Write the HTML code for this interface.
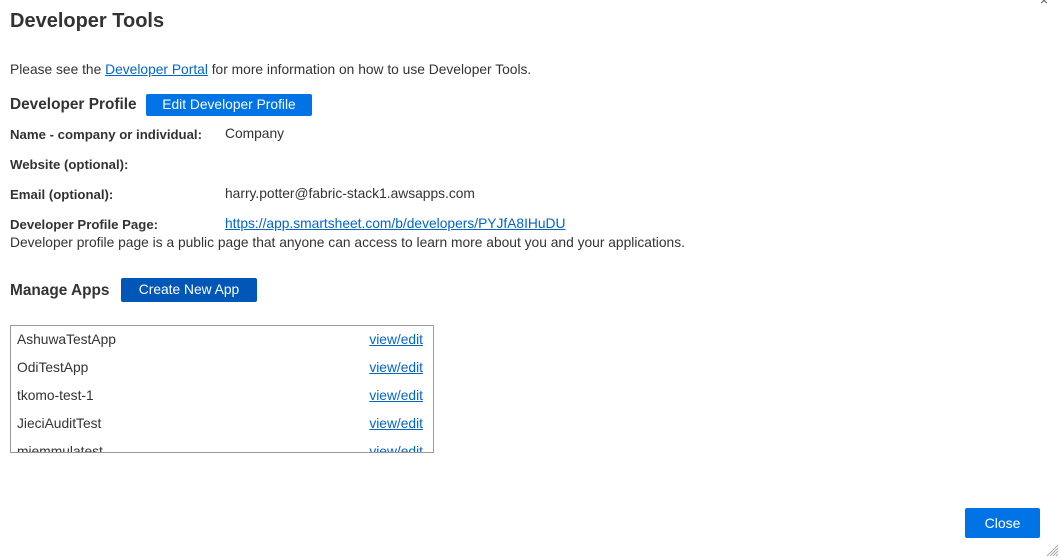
<!DOCTYPE html>
<html><head><style>
body{margin:0;width:1060px;height:558px;background:#fff;font-family:"Liberation Sans",sans-serif;color:#333;position:relative;overflow:hidden;font-size:13.8px}
.a{position:absolute;white-space:nowrap}
h1{position:absolute;left:10px;top:10px;margin:0;font-size:20px;font-weight:bold;color:#333}
a{color:#0066cc;text-decoration:underline}
.b{font-weight:bold;font-size:13.2px}
.btn{position:absolute;color:#fff;text-align:center;border-radius:2px;font-size:13.8px}
.h{font-weight:bold;font-size:15.4px}
.box{position:absolute;left:10px;top:325px;width:422px;height:126px;border:1px solid #999;overflow:hidden}
.row{position:absolute;left:6px;width:406px}
.row a{position:absolute;right:0}
</style></head><body>
<h1>Developer Tools</h1>
<div class="a" style="left:1040px;top:-8px;font-size:14px;color:#555">×</div>
<div class="a" style="left:10px;top:62px">Please see the <a>Developer Portal</a> for more information on how to use Developer Tools.</div>
<div class="a h" style="left:10px;top:96px">Developer Profile</div>
<div class="btn" style="left:146px;top:94px;width:166px;height:22px;line-height:22px;background:#0073e6">Edit Developer Profile</div>
<div class="a b" style="left:10px;top:127px">Name - company or individual:</div>
<div class="a" style="left:225px;top:126px">Company</div>
<div class="a b" style="left:10px;top:157px">Website (optional):</div>
<div class="a b" style="left:10px;top:187px">Email (optional):</div>
<div class="a" style="left:225px;top:186px">harry.potter@fabric-stack1.awsapps.com</div>
<div class="a b" style="left:10px;top:217px">Developer Profile Page:</div>
<div class="a" style="left:225px;top:216px"><a>https://app.smartsheet.com/b/developers/PYJfA8IHuDU</a></div>
<div class="a" style="left:10px;top:235px">Developer profile page is a public page that anyone can access to learn more about you and your applications.</div>
<div class="a h" style="left:10px;top:282px">Manage Apps</div>
<div class="btn" style="left:121px;top:278px;width:136px;height:24px;line-height:24px;background:#0057b8">Create New App</div>
<div class="box">
<div class="row" style="top:6px">AshuwaTestApp<a>view/edit</a></div>
<div class="row" style="top:34px">OdiTestApp<a>view/edit</a></div>
<div class="row" style="top:62px">tkomo-test-1<a>view/edit</a></div>
<div class="row" style="top:90px">JieciAuditTest<a>view/edit</a></div>
<div class="row" style="top:118px">mjemmulatest<a>view/edit</a></div>
</div>
<div class="btn" style="left:965px;top:508px;width:75px;height:30px;line-height:30px;background:#0073e6;font-size:14px">Close</div>
<svg class="a" style="left:1045px;top:543px" width="14" height="14"><path d="M2 13L13 2M5 13L13 5M8 13L13 8M11 13L13 11" stroke="#aaa" stroke-width="1"/></svg>
</body></html>
